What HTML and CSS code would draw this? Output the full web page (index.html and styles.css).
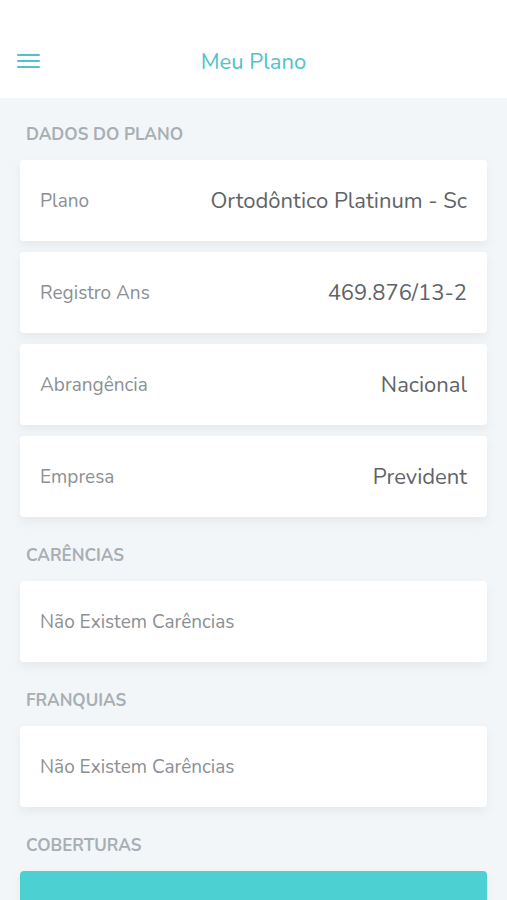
FILE: index.html
```html
<!DOCTYPE html>
<html lang="pt-BR">
  <head>
    <meta charset="UTF-8" />
    <meta name="viewport" content="width=device-width, initial-scale=1.0" />
    <title>Meu Plano</title>
    <link rel="stylesheet" href="styles.css">
  </head>
  <body>
    <header class="topbar">
      <button class="menu-button" aria-label="Menu">
        <svg width="23" height="16" viewBox="0 0 23 16">
          <rect x="0" y="1" width="23" height="2" rx="1" fill="#4fc3c6" />
          <rect x="0" y="7" width="23" height="2" rx="1" fill="#4fc3c6" />
          <rect x="0" y="13" width="23" height="2" rx="1" fill="#4fc3c6" />
        </svg>
      </button>
      <h1 class="title">Meu Plano</h1>
    </header>

    <main>
      <section class="section section-first">
        <h2 class="section-title">Dados do Plano</h2>
        <div class="card">
          <span class="label">Plano</span>
          <span class="value">Ortodôntico Platinum - Sc</span>
        </div>
        <div class="card">
          <span class="label">Registro Ans</span>
          <span class="value">469.876/13-2</span>
        </div>
        <div class="card">
          <span class="label">Abrangência</span>
          <span class="value">Nacional</span>
        </div>
        <div class="card">
          <span class="label">Empresa</span>
          <span class="value">Prevident</span>
        </div>
      </section>

      <section class="section">
        <h2 class="section-title">Carências</h2>
        <div class="card">
          <span class="label">Não Existem Carências</span>
        </div>
      </section>

      <section class="section">
        <h2 class="section-title">Franquias</h2>
        <div class="card">
          <span class="label">Não Existem Carências</span>
        </div>
      </section>

      <section class="section">
        <h2 class="section-title">Coberturas</h2>
        <div class="card card-teal"></div>
      </section>
    </main>
  </body>
</html>
```

FILE: styles.css
```css
body {
  margin: 0;
  background-color: #f3f6f8;
  font-family: "Nunito", Lato, "Open Sans", sans-serif;
  overflow: hidden;
}

.topbar {
  position: relative;
  display: flex;
  align-items: center;
  justify-content: center;
  height: 98px;
  padding-top: 26px;
  box-sizing: border-box;
  background-color: white;
}

.menu-button {
  position: absolute;
  left: 17px;
  top: 53px;
  padding: 0;
  border: none;
  background: none;
  line-height: 0;
  cursor: pointer;
}

.title {
  margin: 0;
  font-size: 22px;
  font-weight: normal;
  color: #4fc3c6;
}

.section {
  padding: 17px 20px 0;
}

.section-first {
  padding-top: 26px;
}

.section-title {
  margin: 0 0 14px 6px;
  font-size: 17px;
  font-weight: bold;
  text-transform: uppercase;
  color: #a8afb4;
  line-height: 22px;
}

.card {
  display: flex;
  align-items: center;
  justify-content: space-between;
  height: 81px;
  padding: 0 20px;
  margin-bottom: 11px;
  background-color: white;
  border-radius: 4px;
  box-shadow: 0 5px 10px rgba(120, 140, 150, 0.1);
}

.label {
  font-size: 19px;
  color: #8b9094;
}

.value {
  font-size: 22px;
  color: #5f6468;
}

.card-teal {
  background-color: #4dd0d2;
}
```
